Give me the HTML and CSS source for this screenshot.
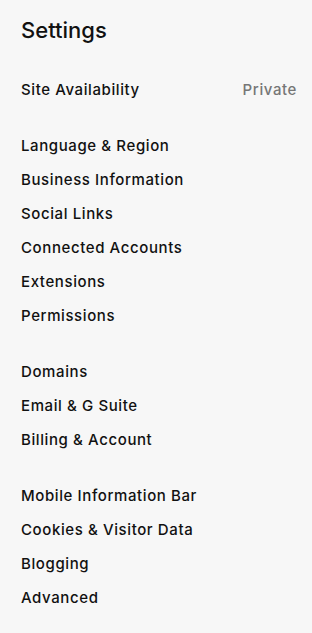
FILE: index.html
```html
<!DOCTYPE html>
<html lang="en">
<head>
  <meta charset="UTF-8">
  <title>Settings</title>
  <link rel="stylesheet" href="styles.css">
</head>
<body>
  <h1 class="title">Settings</h1>

  <ul class="group">
    <li class="row"><span>Site Availability</span><span class="value">Private</span></li>
  </ul>

  <ul class="group">
    <li class="row">Language &amp; Region</li>
    <li class="row">Business Information</li>
    <li class="row">Social Links</li>
    <li class="row">Connected Accounts</li>
    <li class="row">Extensions</li>
    <li class="row">Permissions</li>
  </ul>

  <ul class="group">
    <li class="row">Domains</li>
    <li class="row">Email &amp; G Suite</li>
    <li class="row">Billing &amp; Account</li>
  </ul>

  <ul class="group">
    <li class="row">Mobile Information Bar</li>
    <li class="row">Cookies &amp; Visitor Data</li>
    <li class="row">Blogging</li>
    <li class="row">Advanced</li>
  </ul>
</body>
</html>
```

FILE: styles.css
```css
body {
  margin: 0;
  padding: 0 16px 0 21px;
  background-color: #f7f7f7;
  font-family: Inter, "Noto Sans", sans-serif;
  color: #111;
}
.title {
  margin: 0;
  height: 61px;
  line-height: 61px;
  font-size: 22px;
  font-weight: 500;
}
.group {
  list-style: none;
  margin: 12px 0 22px;
  padding: 0;
}
.group + .group {
  margin-top: 0;
}
.row {
  display: flex;
  justify-content: space-between;
  height: 34px;
  line-height: 34px;
  font-size: 15px;
  font-weight: 500;
  letter-spacing: 0.6px;
}
.value {
  color: #767676;
  margin-right: -1px;
}
```
